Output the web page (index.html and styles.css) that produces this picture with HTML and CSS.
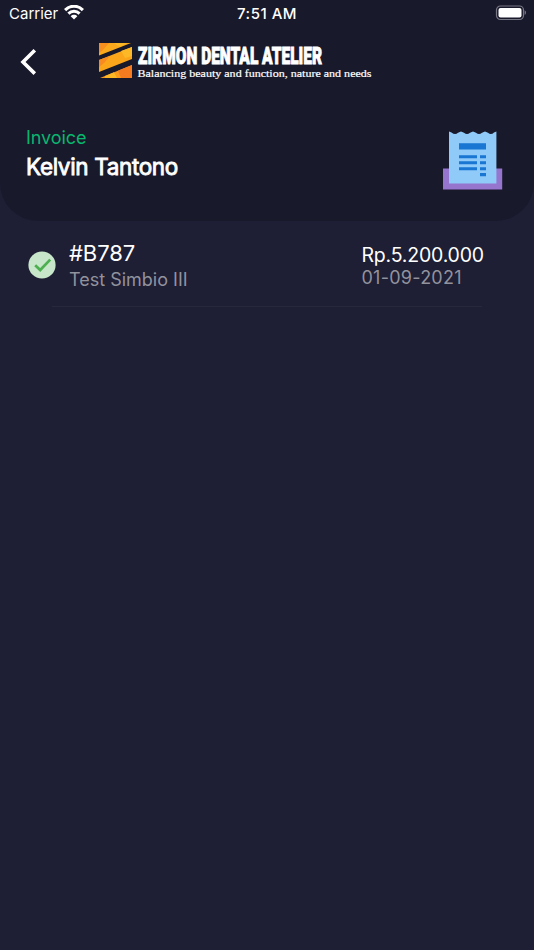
FILE: index.html
```html
<!DOCTYPE html>
<html lang="en">
<head>
<meta charset="utf-8">
<title>Invoice</title>
<link rel="stylesheet" href="styles.css">
</head>
<body>
<header class="header">
  <div class="status">
    <div class="carrier"><span>Carrier</span>
      <svg class="wifi" width="20" height="15" viewBox="0 0 20 15" fill="none" stroke="#fff" stroke-width="3"><path d="M1.1 5.1C6-.1 14-.1 18.9 5.1M4.4 8.6C7.6 5.4 12.4 5.4 15.6 8.6"/><path d="M6.7 11.2C8.6 9.3 11.4 9.3 13.3 11.2L10 14.5Z" fill="#fff" stroke="none"/></svg>
    </div>
    <div class="time">7:51 AM</div>
    <svg class="battery" width="32" height="16" viewBox="0 0 32 16"><rect x="1.5" y="1" width="27" height="13.5" rx="4" fill="none" stroke="#777684" stroke-width="1.2"/><rect x="3.5" y="3" width="23" height="9.5" rx="2" fill="#fff"/><path d="M29.6 5.3C31.5 6 31.5 9.3 29.6 10Z" fill="#777684"/></svg>
  </div>
  <nav class="nav">
    <svg class="back" width="18" height="28" viewBox="0 0 18 28"><path d="M14.8 2.2L3 14L14.8 25.6" fill="none" stroke="#fff" stroke-width="3.6"/></svg>
    <svg class="logo" width="276" height="40" viewBox="0 0 276 40">
      <path d="M1 2H33L1 14.5Z" fill="#fba91c"/><path d="M1 2H11L5 9L1 12Z" fill="#f78f1e"/><path d="M16 2H29L22 6Z" fill="#fcb725"/>
      <path d="M34 6V18L1 31V19Z" fill="#fba51b"/><path d="M1 19L12 15L6 22L1 26Z" fill="#f78a20"/><path d="M23 10L34 6V15L27 17Z" fill="#fdb827"/>
      <path d="M34 24V37H2Z" fill="#f99a1c"/><path d="M34 24V37H23L20 29.7Z" fill="#f47b20"/><path d="M7 35L16 31.3L19 37H7Z" fill="#fcb725"/>
      <text class="brand" x="40" y="23.4" textLength="184" lengthAdjust="spacingAndGlyphs">ZIRMON DENTAL ATELIER</text>
      <text class="tagline" x="39.5" y="35.5" textLength="234" lengthAdjust="spacingAndGlyphs">Balancing beauty and function, nature and needs</text>
    </svg>
  </nav>
  <div class="account">
    <div>
      <div class="label">Invoice</div>
      <div class="name">Kelvin Tantono</div>
    </div>
    <svg width="60" height="60" viewBox="0 0 60 60"><path fill="#9575cd" d="M0 38.5H59.2V59.5H0Z"/><path fill="#90caf9" d="M6 1.6L8.5 2.4Q12 5.4 15 2.8L18 1.4L21 2.8Q24 5.4 27 2.8L30 1.4L33 2.8Q36 5.4 39 2.8L42 1.4L45 2.8Q48 5.4 51 2.4L53.4 1.6V53.4H6Z"/><path fill="#1976d2" d="M16 13.3H43V19.5H16ZM16 25.2H34V28.3H16ZM37 25.2H43V28.3H37ZM16 31.2H34V34.3H16ZM37 31.2H43V34.3H37ZM16 37.2H34V40.3H16ZM37 37.2H43V40.3H37ZM37 43.1H43V46.2H37Z"/></svg>
  </div>
</header>
<main class="list">
  <article class="invoice">
    <svg class="check" width="28" height="28" viewBox="0 0 28 28"><circle cx="14" cy="14" r="13.6" fill="#c8e6c9"/><path d="M7.2 14.2L12.2 19L22.2 8.6" fill="none" stroke="#4caf50" stroke-width="2.7"/></svg>
    <div class="detail"><div class="number">#B787</div><div class="item">Test Simbio III</div></div>
    <div class="sum"><div class="amount">Rp.5.200.000</div><div class="date">01-09-2021</div></div>
  </article>
</main>
</body>
</html>
```

FILE: styles.css
```css
* { box-sizing: border-box; }
body { margin: 0; min-height: 950px; background: #1e1e34; color: #fff; font-family: Inter, sans-serif; }
.header { height: 221px; background: #19192c; border-radius: 0 0 38px 38px; }
.status { height: 28px; display: grid; grid-template-columns: 1fr auto 1fr; padding: 0 7px 0 9px; font-size: 15px; line-height: 28px; }
.carrier { display: flex; gap: 6px; }
.wifi { margin-top: 5px; }
.time { font-weight: 500; letter-spacing: .5px; margin-right: 2px; }
.battery { justify-self: end; margin-top: 5px; }
.nav { height: 72px; display: flex; padding: 14px 0 0 20px; }
.back { margin-top: 6px; }
.logo { margin-left: 60px; margin-top: -1px; overflow: visible; }
.brand { font: 900 23.5px Roboto, sans-serif; fill: #fff; stroke: #fff; stroke-width: .9px; }
.tagline { font: 11px "Liberation Serif", serif; fill: #fff; stroke: #fff; stroke-width: .2px; }
.account { display: flex; justify-content: space-between; padding: 25px 31px 0 26px; }
.account svg { margin-top: 5px; }
.label { color: #08b66e; font-size: 18px; line-height: 25px; letter-spacing: -.05px; }
.name { font-size: 22.5px; line-height: 30px; margin-top: 2px; letter-spacing: -.35px; -webkit-text-stroke: .8px #fff; }
.list { padding: 20px 52px 0 52px; }
.invoice { height: 66px; display: flex; border-bottom: 1px solid #28283d; }
.check { margin: 10px 0 0 -24px; flex: none; }
.detail { margin-left: 13px; width: 292.5px; flex: none; }
.number { font-size: 22px; line-height: 25px; letter-spacing: -.1px; }
.item { font-size: 18px; line-height: 27px; color: #92929d; }
.sum { white-space: nowrap; padding-top: 3px; }
.amount { font-size: 19.5px; line-height: 23px; letter-spacing: -.2px; }
.date { font-size: 18px; line-height: 22px; letter-spacing: .25px; color: #92929d; }
```
